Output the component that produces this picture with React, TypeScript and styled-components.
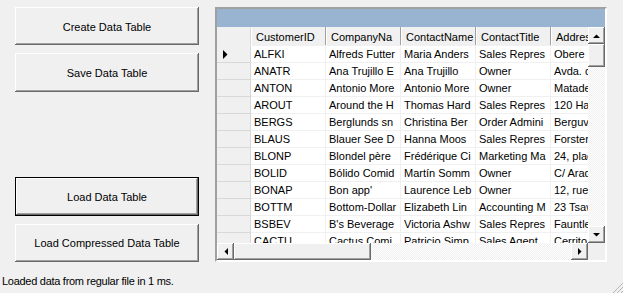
import React from "react";
import styled, { createGlobalStyle, css } from "styled-components";

const GlobalStyle = createGlobalStyle`
  html, body {
    margin: 0;
    padding: 0;
    background: #f0f0f0;
  }
  body {
    font-family: "Liberation Sans", Arial, sans-serif;
    font-size: 11px;
    color: #000;
  }
`;

type Customer = [string, string, string, string, string];

const customers: Customer[] = [
  ["ALFKI", "Alfreds Futterkiste", "Maria Anders", "Sales Representative", "Obere Str. 57"],
  ["ANATR", "Ana Trujillo Emparedados y helados", "Ana Trujillo", "Owner", "Avda. de la Constitución 2222"],
  ["ANTON", "Antonio Moreno Taquería", "Antonio Moreno", "Owner", "Mataderos 2312"],
  ["AROUT", "Around the Horn", "Thomas Hardy", "Sales Representative", "120 Hanover Sq."],
  ["BERGS", "Berglunds snabbköp", "Christina Berglund", "Order Administrator", "Berguvsvägen 8"],
  ["BLAUS", "Blauer See Delikatessen", "Hanna Moos", "Sales Representative", "Forsterstr. 57"],
  ["BLONP", "Blondel père et fils", "Frédérique Citeaux", "Marketing Manager", "24, place Kléber"],
  ["BOLID", "Bólido Comidas preparadas", "Martín Sommer", "Owner", "C/ Araquil, 67"],
  ["BONAP", "Bon app'", "Laurence Lebihan", "Owner", "12, rue des Bouchers"],
  ["BOTTM", "Bottom-Dollar Markets", "Elizabeth Lincoln", "Accounting Manager", "23 Tsawassen Blvd."],
  ["BSBEV", "B's Beverages", "Victoria Ashworth", "Sales Representative", "Fauntleroy Circus"],
  ["CACTU", "Cactus Comidas para llevar", "Patricio Simpson", "Sales Agent", "Cerrito 333"],
];

const columns = ["CustomerID", "CompanyName", "ContactName", "ContactTitle", "Address"];

// the old DataGrid drops whole characters that don't fit the cell
const CELL_TEXT_WIDTH = 67.5;
let measureCtx: CanvasRenderingContext2D | null = null;

const clipText = (text: string) => {
  if (!measureCtx) {
    measureCtx = document.createElement("canvas").getContext("2d");
    if (!measureCtx) return text;
    measureCtx.font = '11px "Liberation Sans", Arial, sans-serif';
  }
  let out = text;
  while (out.length > 1 && measureCtx.measureText(out).width > CELL_TEXT_WIDTH) {
    out = out.slice(0, -1);
  }
  return out;
};

const raised = css`
  background: #f0f0f0;
  box-shadow: inset -1px -1px #696969, inset 1px 1px #fff, inset -2px -2px #a0a0a0;
`;

const Window = styled.div`
  width: 623px;
  height: 293px;
  display: flex;
  flex-direction: column;
  overflow: hidden;
`;

const Main = styled.div`
  display: flex;
  gap: 16px;
  padding: 7px 0 0 15px;
  height: 255px;
`;

const ButtonColumn = styled.div`
  display: flex;
  flex-direction: column;
  gap: 8px;
  width: 184px;
`;

const Spacer = styled.div`
  height: 72px;
`;

const FormButton = styled.button<{ $default?: boolean }>`
  ${raised};
  height: 40px;
  border: none;
  padding: 1px 0 0;
  font-family: "Liberation Sans", Arial, sans-serif;
  font-size: 11px;
  color: #000;
  ${({ $default }) =>
    $default &&
    css`
      box-shadow: inset 0 0 0 1px #000, inset -2px -2px #696969, inset 2px 2px #fff,
        inset -3px -3px #a0a0a0;
    `}
`;

const Grid = styled.div`
  width: 388px;
  height: 251px;
  border: 2px solid;
  border-color: #a0a0a0 #fff #fff #a0a0a0;
  display: flex;
  flex-direction: column;
  background: #f0f0f0;
`;

const Caption = styled.div`
  height: 18px;
  background: #99b4d1;
`;

const Middle = styled.div`
  display: flex;
  height: 216px;
`;

const DataArea = styled.div`
  width: 371px;
  overflow: hidden;
  display: flex;
  flex-direction: column;
  background: #fff;
`;

const HeaderRow = styled.div`
  display: flex;
  height: 19px;
  flex: none;
  background: #f0f0f0;
  border-bottom: 1px solid #f0f0f0;
  box-sizing: border-box;
`;

const Row = styled.div`
  display: flex;
  height: 17px;
  flex: none;
`;

const Corner = styled.div`
  width: 34px;
  flex: none;
  box-sizing: border-box;
  border-right: 1px solid #d8d8d8;
`;

const HeaderCell = styled.div`
  width: 75px;
  flex: none;
  box-sizing: border-box;
  padding: 4px 0 0 5px;
  white-space: nowrap;
  overflow: hidden;
  border-right: 1px solid #a0a0a0;
  box-shadow: inset 1px 0 #fff;
`;

const RowHeader = styled.div`
  width: 34px;
  flex: none;
  box-sizing: border-box;
  background: #f0f0f0;
  border-right: 1px solid #d8d8d8;
  border-bottom: 1px solid #d8d8d8;
  display: flex;
  align-items: center;
  padding-left: 6px;
`;

const Cell = styled.div`
  width: 75px;
  flex: none;
  box-sizing: border-box;
  padding: 2px 0 0 3px;
  white-space: nowrap;
  overflow: hidden;
  border-right: 1px solid #f0f0f0;
  border-bottom: 1px solid #f0f0f0;
`;

const VScroll = styled.div`
  width: 17px;
  display: flex;
  flex-direction: column;
`;

const HScrollRow = styled.div`
  display: flex;
  height: 17px;
`;

const HScroll = styled.div`
  width: 371px;
  display: flex;
`;

const Track = styled.div`
  flex: 1;
  background-color: #fff;
  background-image: conic-gradient(#f0f0f0 25%, #fff 0 50%, #f0f0f0 0 75%, #fff 0);
  background-size: 2px 2px;
`;

const ScrollButton = styled.div`
  ${raised};
  width: 17px;
  height: 17px;
  flex: none;
  display: flex;
  align-items: center;
  justify-content: center;
`;

const Thumb = styled.div<{ $size: number; $vertical?: boolean }>`
  ${raised};
  flex: none;
  ${({ $size, $vertical }) => ($vertical ? `height: ${$size}px;` : `width: ${$size}px;`)}
`;

const ScrollCorner = styled.div`
  width: 17px;
  background: #f0f0f0;
`;

const StatusBar = styled.div`
  flex: 1;
  display: flex;
  align-items: center;
  justify-content: space-between;
  padding: 7px 0 0 2px;
  letter-spacing: -0.28px;
`;

const Grip = styled.svg`
  align-self: flex-end;
`;

const Arrow = ({ dir }: { dir: "up" | "down" | "left" | "right" }) => {
  const points = {
    up: "0,4 7,4 3.5,0.5",
    down: "0,0 7,0 3.5,3.5",
    left: "4,0 4,7 0.5,3.5",
    right: "0,0 0,7 3.5,3.5",
  }[dir];
  const vertical = dir === "up" || dir === "down";
  return (
    <svg width={vertical ? 7 : 4} height={vertical ? 4 : 7} viewBox={vertical ? "0 0 7 4" : "0 0 4 7"}>
      <polygon points={points} fill="#000" />
    </svg>
  );
};

const App = () => {
  return (
    <Window>
      <GlobalStyle />
      <Main>
        <ButtonColumn>
          <FormButton>Create Data Table</FormButton>
          <FormButton>Save Data Table</FormButton>
          <Spacer />
          <FormButton $default>Load Data Table</FormButton>
          <FormButton>Load Compressed Data Table</FormButton>
        </ButtonColumn>
        <Grid>
          <Caption />
          <Middle>
            <DataArea>
              <HeaderRow>
                <Corner />
                {columns.map((c) => (
                  <HeaderCell key={c}>{clipText(c)}</HeaderCell>
                ))}
              </HeaderRow>
              {customers.map((row, i) => (
                <Row key={row[0]}>
                  <RowHeader>
                    {i === 0 && (
                      <svg width="5" height="9" viewBox="0 0 5 9">
                        <polygon points="0,0 0,9 4.5,4.5" fill="#000" />
                      </svg>
                    )}
                  </RowHeader>
                  {row.map((v, j) => (
                    <Cell key={j}>{clipText(v)}</Cell>
                  ))}
                </Row>
              ))}
            </DataArea>
            <VScroll>
              <ScrollButton>
                <Arrow dir="up" />
              </ScrollButton>
              <Thumb $vertical $size={23} />
              <Track />
              <ScrollButton>
                <Arrow dir="down" />
              </ScrollButton>
            </VScroll>
          </Middle>
          <HScrollRow>
            <HScroll>
              <ScrollButton>
                <Arrow dir="left" />
              </ScrollButton>
              <Thumb $size={137} />
              <Track />
              <ScrollButton>
                <Arrow dir="right" />
              </ScrollButton>
            </HScroll>
            <ScrollCorner />
          </HScrollRow>
        </Grid>
      </Main>
      <StatusBar>
        <span>Loaded data from regular file in 1 ms.</span>
        <Grip width="12" height="12" viewBox="0 0 12 12">
          <line x1="12" y1="2" x2="2" y2="12" stroke="#b8b8b8" />
          <line x1="12" y1="6" x2="6" y2="12" stroke="#b8b8b8" />
          <line x1="12" y1="10" x2="10" y2="12" stroke="#b8b8b8" />
        </Grip>
      </StatusBar>
    </Window>
  );
};

export default App;
